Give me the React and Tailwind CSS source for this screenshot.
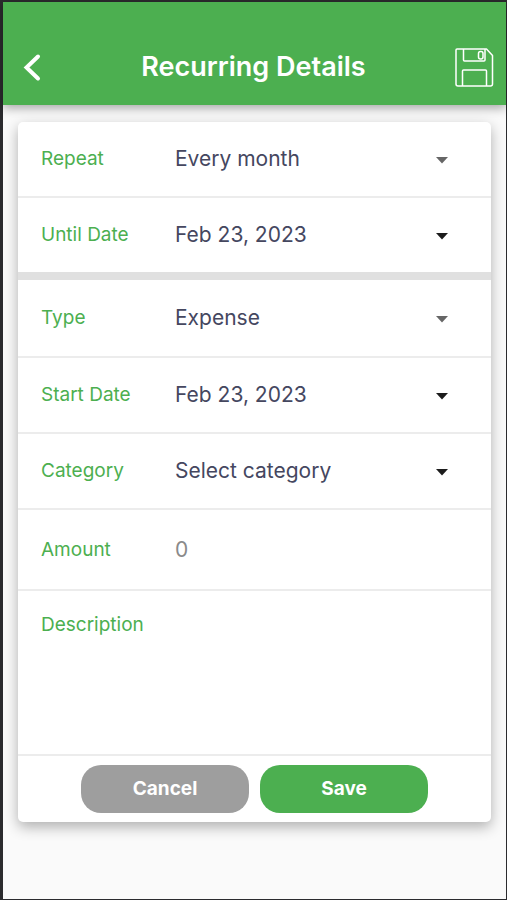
function BackIcon() {
  return (
    <svg viewBox="0 0 40 40" className="w-10 h-10" fill="none" stroke="currentColor" strokeWidth="4" strokeLinecap="round" strokeLinejoin="miter">
      <path d="M25 9.5L13.5 20.5L25 31.5" />
    </svg>
  );
}

function SaveIcon() {
  return (
    <svg viewBox="0 0 40 40" className="w-10 h-10" fill="none" stroke="currentColor" strokeWidth="1.5" strokeLinejoin="round">
      <path d="M3 2H32.5L38.5 8.5V37Q38.5 39 36.5 39H4Q2 39 2 37V3Q2 2 3 2Z" />
      <path d="M9.5 2V13Q9.5 14 10.5 14H30Q31 14 31 13V2" />
      <path d="M8.5 39V24Q8.5 23 9.5 23H31.5Q32.5 23 32.5 24V39" />
      <rect x="24.5" y="4.5" width="4.5" height="7.5" rx="2" />
    </svg>
  );
}

function Caret({ className }) {
  return (
    <svg viewBox="0 0 12 10" className={`w-3 h-2.5 shrink-0 pointer-events-none ${className}`} fill="currentColor">
      <path d="M0 3H12L6 9.5Z" />
    </svg>
  );
}

function SelectRow({ id, label, options, height, caret }) {
  return (
    <div className={`flex items-center pl-[23px] pr-[43px] ${height}`}>
      <label htmlFor={id} className="w-[134px] shrink-0 text-[19px] leading-7 text-[#4caf50]">{label}</label>
      <select id={id} className="flex-1 min-w-0 h-full appearance-none bg-transparent text-[21px] text-[#45475f] outline-none">
        {options.map((option) => (
          <option key={option}>{option}</option>
        ))}
      </select>
      <Caret className={caret} />
    </div>
  );
}

function DateRow({ id, label, value, height }) {
  return (
    <div className={`flex items-center pl-[23px] pr-[43px] ${height}`}>
      <label htmlFor={id} className="w-[134px] shrink-0 text-[19px] leading-7 text-[#4caf50]">{label}</label>
      <button id={id} type="button" className="flex flex-1 items-center justify-between h-full text-left text-[21px] text-[#45475f]">
        {value}
        <Caret className="text-[#1c1c1c]" />
      </button>
    </div>
  );
}

export default function App() {
  return (
    <div className="flex flex-col min-h-screen bg-[#fafafa] border-t-2 border-l-3 border-r border-b border-[#2b2b2e] font-['Inter',sans-serif]">
      <header className="flex items-end justify-between h-[103px] pl-2.5 pr-3 pb-[18px] bg-[#4caf50] text-white shadow-[0_3px_10px_rgba(0,0,0,0.35)]">
        <button type="button" aria-label="Back" className="w-10 h-10">
          <BackIcon />
        </button>
        <h1 className="text-[27px] leading-10 font-semibold">Recurring Details</h1>
        <button type="button" aria-label="Save recurring details" className="w-10 h-10">
          <SaveIcon />
        </button>
      </header>

      <main className="px-[15px] pt-[17px] pb-8">
        <form className="rounded-[5px] bg-white shadow-[0_5px_14px_rgba(0,0,0,0.3)]" onSubmit={(e) => e.preventDefault()}>
          <div className="divide-y-2 divide-[#ececec]">
            <SelectRow id="repeat" label="Repeat" options={["Every month", "Every week", "Every year"]} height="h-[76px]" caret="text-[#666666]" />
            <DateRow id="until" label="Until Date" value="Feb 23, 2023" height="h-[74px]" />
          </div>
          <div className="h-2 bg-[#e0e0e0]" />
          <div className="divide-y-2 divide-[#ececec]">
            <SelectRow id="type" label="Type" options={["Expense", "Income"]} height="h-[78px]" caret="text-[#666666]" />
            <DateRow id="start" label="Start Date" value="Feb 23, 2023" height="h-[76px]" />
            <SelectRow id="category" label="Category" options={["Select category"]} height="h-[76px]" caret="text-[#1c1c1c]" />
            <div className="flex items-center h-[81px] pl-[23px] pr-[43px]">
              <label htmlFor="amount" className="w-[134px] shrink-0 text-[19px] leading-7 text-[#4caf50]">Amount</label>
              <input id="amount" type="text" inputMode="decimal" placeholder="0" className="flex-1 min-w-0 h-full text-[21px] placeholder:text-[#8a8a8a] outline-none" />
            </div>
            <div className="flex items-start h-[165px] pt-5 pl-[23px] pr-[43px]">
              <label htmlFor="description" className="w-[134px] shrink-0 text-[19px] leading-7 text-[#4caf50]">Description</label>
              <textarea id="description" className="flex-1 min-w-0 h-32 resize-none text-[21px] text-[#45475f] outline-none" />
            </div>
            <div className="flex items-center justify-center gap-[11px] h-[66px] px-4 text-[19px] font-bold text-white">
              <button type="button" className="w-[168px] h-12 rounded-[20px] bg-[#9e9e9e]">Cancel</button>
              <button type="submit" className="w-[168px] h-12 rounded-[20px] bg-[#4caf50]">Save</button>
            </div>
          </div>
        </form>
      </main>
    </div>
  );
}
